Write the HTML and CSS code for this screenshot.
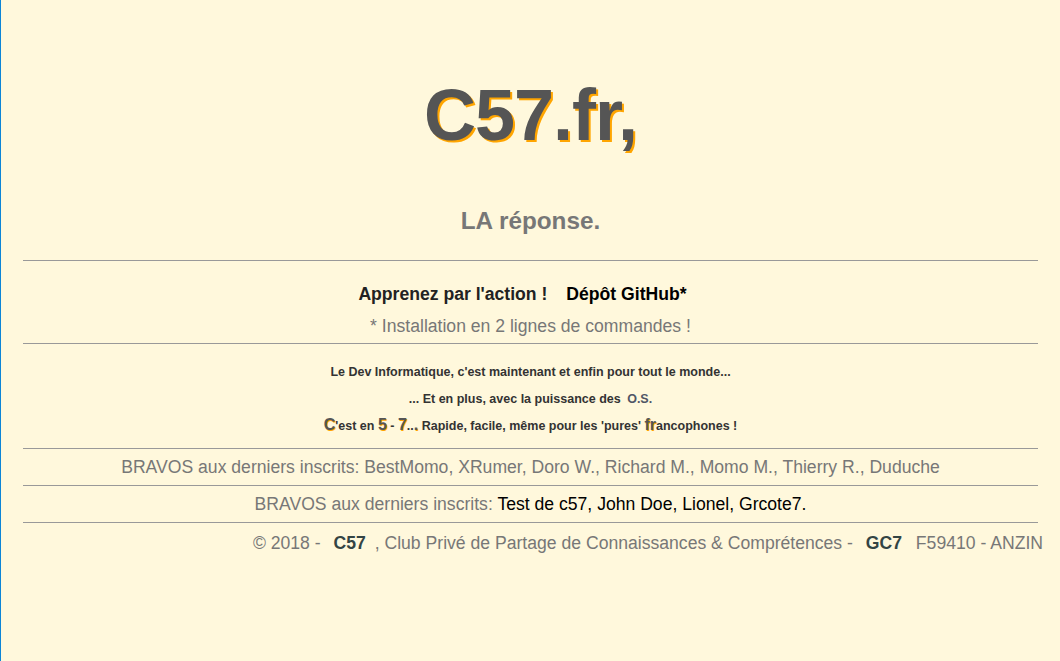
FILE: index.html
```html
<!DOCTYPE html>
<html lang="fr">
<head>
<meta charset="utf-8">
<title>C57.fr</title>
<link rel="stylesheet" href="styles.css">
</head>
<body>
<div class="page">
  <header class="hero">
    <h1 class="brand">C57.fr,</h1>
    <h2 class="tagline">LA réponse.</h2>
  </header>
  <hr class="rule">
  <section class="action">
    <p class="action-links"><span class="learn">Apprenez par l'action !</span><a class="github" href="#">Dépôt GitHub*</a></p>
    <p class="note">* Installation en 2 lignes de commandes !</p>
  </section>
  <hr class="rule">
  <section class="pitch">
    <p>Le Dev Informatique, c'est maintenant et enfin pour tout le monde...</p>
    <p>... Et en plus, avec la puissance des <span class="os">O.S.</span></p>
    <p><span class="glow big">C</span>'est en <span class="glow big">5</span> - <span class="glow big">7</span>..<span class="glow big">.</span> Rapide, facile, même pour les 'pures' <span class="glow big">fr</span>ancophones !</p>
  </section>
  <hr class="rule">
  <p class="bravos">BRAVOS aux derniers inscrits: BestMomo, XRumer, Doro W., Richard M., Momo M., Thierry R., Duduche</p>
  <hr class="rule">
  <p class="bravos">BRAVOS aux derniers inscrits: <span class="names">Test de c57, John Doe, Lionel, Grcote7.</span></p>
  <hr class="rule">
  <footer class="footer">© 2018 - <b class="strong c57">C57</b> , Club Privé de Partage de Connaissances &amp; Comprétences - <b class="strong gc7">GC7</b> F59410 - ANZIN</footer>
</div>
</body>
</html>
```
FILE: styles.css
```css
html, body {
  margin: 0;
  padding: 0;
  height: 100%;
}
body {
  background: #fff8dc;
  font-family: "Liberation Sans", Arial, sans-serif;
  border-left: 1px solid #0c85d6;
  box-sizing: border-box;
}
.page {
  padding: 0 22px;
}
.hero {
  text-align: center;
  padding-top: 70px;
}
.brand {
  margin: 0;
  font-size: 72px;
  line-height: 90px;
  font-weight: bold;
  color: #555;
  letter-spacing: -1px;
  text-shadow: 2px 2px 0 #ffa500;
}
.tagline {
  margin: 46px 0 0;
  font-size: 24.3px;
  line-height: 30px;
  font-weight: bold;
  color: #777;
}
.rule {
  border: 0;
  border-top: 1px solid #999;
  margin: 0;
  height: 0;
}
.hero + .rule { margin-top: 24px; }
.action { text-align: center; padding: 21px 0 5px; }
.action p { margin: 0; }
.action-links {
  font-size: 17.6px;
  line-height: 24px;
  font-weight: bold;
  color: #222;
  padding-right: 16px;
}
.github { color: #000; text-decoration: none; margin-left: 19px; }
.note {
  font-size: 17.6px;
  line-height: 24px;
  color: #777;
  margin-top: 8px !important;
}
.pitch {
  text-align: center;
  padding: 20px 0 14px;
  font-size: 12.5px;
  font-weight: bold;
  color: #333;
}
.pitch p { margin: 0 0 10.5px; line-height: 16px; }
.pitch p:last-child { margin-bottom: 0; }
.os { color: #4f5666; margin-left: 3px; }
.glow { color: #555; text-shadow: 1px 1px 0 #ffa500; }
.big { font-size: 16px; }
.bravos {
  margin: 0;
  text-align: center;
  font-size: 17.6px;
  line-height: 36px;
  color: #777;
}
.names { color: #000; }
.footer {
  text-align: right;
  padding: 8px 17px 0 0;
  margin-right: -22px;
  font-size: 17.6px;
  line-height: 24px;
  color: #777;
}
.strong { color: #344; }
.c57 { margin: 0 4px 0 8px; }
.gc7 { margin: 0 9px 0 8px; }
```
